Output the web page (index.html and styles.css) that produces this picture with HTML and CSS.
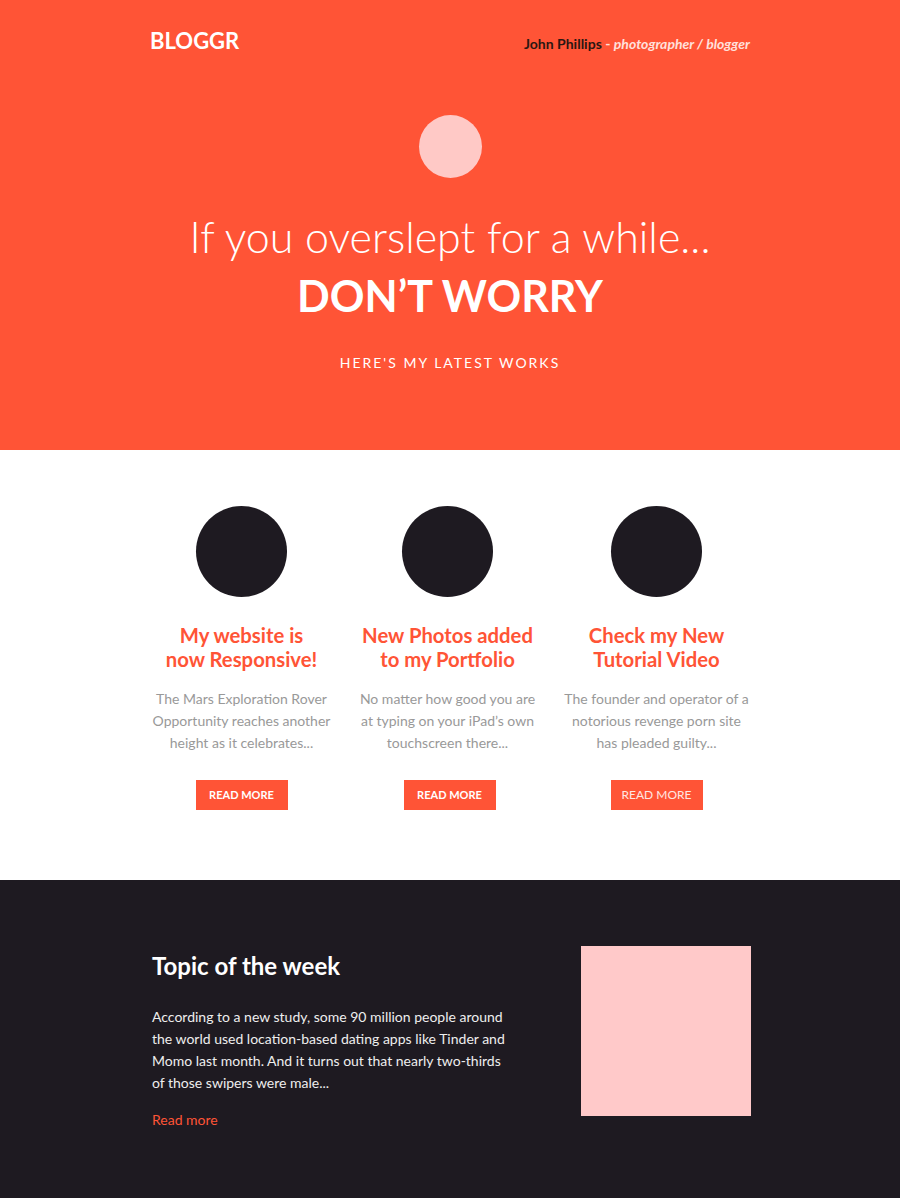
FILE: index.html
```html
<!DOCTYPE html>
<html lang="en">
<head>
<meta charset="utf-8">
<title>Bloggr</title>
<link rel="stylesheet" href="styles.css">
</head>
<body>
<header class="hero">
  <div class="container topbar">
    <div class="logo">BLOGGR</div>
    <div class="author"><span class="author-name">John Phillips</span> - <em>photographer / blogger</em></div>
  </div>
  <div class="hero-avatar"></div>
  <h1 class="hero-title"><span class="hero-light">If you overslept for a while...</span><span class="hero-bold">DON’T WORRY</span></h1>
  <p class="hero-sub">HERE'S MY LATEST WORKS</p>
</header>

<section class="works">
  <div class="container works-grid">
    <article class="work">
      <div class="work-thumb"></div>
      <h2 class="work-title">My website is<br>now Responsive!</h2>
      <p class="work-text">The Mars Exploration Rover Opportunity reaches another height as it celebrates...</p>
      <a class="btn btn-bold" href="#">READ MORE</a>
    </article>
    <article class="work">
      <div class="work-thumb"></div>
      <h2 class="work-title">New Photos added<br>to my Portfolio</h2>
      <p class="work-text">No matter how good you are at typing on your iPad’s own touchscreen there...</p>
      <a class="btn btn-bold btn-shift" href="#">READ MORE</a>
    </article>
    <article class="work">
      <div class="work-thumb"></div>
      <h2 class="work-title">Check my New<br>Tutorial Video</h2>
      <p class="work-text">The founder and operator of a notorious revenge porn site has pleaded guilty...</p>
      <a class="btn btn-regular" href="#">READ MORE</a>
    </article>
  </div>
</section>

<section class="topic">
  <div class="container topic-row">
    <div class="topic-body">
      <h2 class="topic-title">Topic of the week</h2>
      <p class="topic-text">According to a new study, some 90 million people around the world used location-based dating apps like Tinder and Momo last month. And it turns out that nearly two-thirds of those swipers were male...</p>
      <a class="topic-link" href="#">Read more</a>
    </div>
    <div class="topic-image"></div>
  </div>
</section>
</body>
</html>
```
FILE: styles.css
```css
* { box-sizing: border-box; }
html, body { margin: 0; padding: 0; }
body {
  font-family: Lato, "Open Sans", "Liberation Sans", sans-serif;
  background: #ffffff;
  color: #1e1a21;
}
.container {
  width: 600px;
  margin: 0 auto;
}

/* Hero */
.hero {
  background: #ff5436;
  height: 450px;
  padding-top: 28px;
  text-align: center;
  color: #ffffff;
}
.topbar {
  display: flex;
  justify-content: space-between;
  align-items: baseline;
}
.logo {
  font-size: 22px;
  font-weight: 700;
  line-height: 1.2;
  color: #ffffff;
}
.author {
  font-size: 14px;
  font-weight: 700;
  color: #ffe0dc;
}
.author-name { color: #2b1712; }
.author em { font-style: italic; }
.hero-avatar {
  width: 63px;
  height: 63px;
  border-radius: 50%;
  background: #ffc9c6;
  margin: 61px auto 0;
}
.hero-title {
  margin: 33px 0 0;
  font-weight: 400;
}
.hero-light {
  display: block;
  font-size: 43px;
  font-weight: 300;
  line-height: 1.2;
}
.hero-bold {
  display: block;
  font-size: 43px;
  font-weight: 700;
  line-height: 1.2;
  margin-top: 7px;
}
.hero-sub {
  margin: 33px 0 0;
  font-size: 14px;
  letter-spacing: 2px;
  line-height: 1.2;
}

/* Works */
.works {
  height: 430px;
  padding-top: 56px;
}
.works-grid {
  display: grid;
  grid-template-columns: 183px 187px 189px;
  column-gap: 21px;
}
.work {
  display: flex;
  flex-direction: column;
  align-items: center;
  text-align: center;
}
.work-thumb {
  width: 91px;
  height: 91px;
  border-radius: 50%;
  background: #1e1a21;
}
.work-title {
  margin: 26px 0 0;
  font-size: 20.3px;
  font-weight: 700;
  line-height: 24px;
  color: #ff5436;
}
.work-text {
  margin: 17px 0 0;
  font-size: 14px;
  line-height: 22px;
  color: #999999;
}
.btn {
  display: block;
  width: 92px;
  height: 30px;
  margin-top: 26px;
  background: #ff5436;
  color: #ffffff;
  font-size: 11px;
  line-height: 30px;
  text-decoration: none;
  text-align: center;
}
.btn-shift { transform: translateX(2px); }
.btn-bold { font-weight: 700; }
.btn-regular { font-weight: 400; font-size: 12px; color: #ffe6e2; }

/* Topic */
.topic {
  background: #1e1a21;
  height: 318px;
  padding-top: 66px;
}
.topic-row {
  display: flex;
  justify-content: space-between;
  align-items: flex-start;
}
.topic-body {
  width: 360px;
  padding-left: 2px;
}
.topic-title {
  margin: 5px 0 0;
  font-size: 24px;
  font-weight: 700;
  line-height: 30px;
  color: #ffffff;
}
.topic-text {
  margin: 25px 0 0;
  font-size: 14px;
  line-height: 22px;
  color: #eeeeee;
}
.topic-link {
  display: inline-block;
  margin-top: 17px;
  font-size: 14px;
  color: #ff5436;
  text-decoration: none;
}
.topic-image {
  width: 170px;
  height: 170px;
  background: #ffc9c9;
  margin-right: -1px;
}
```
